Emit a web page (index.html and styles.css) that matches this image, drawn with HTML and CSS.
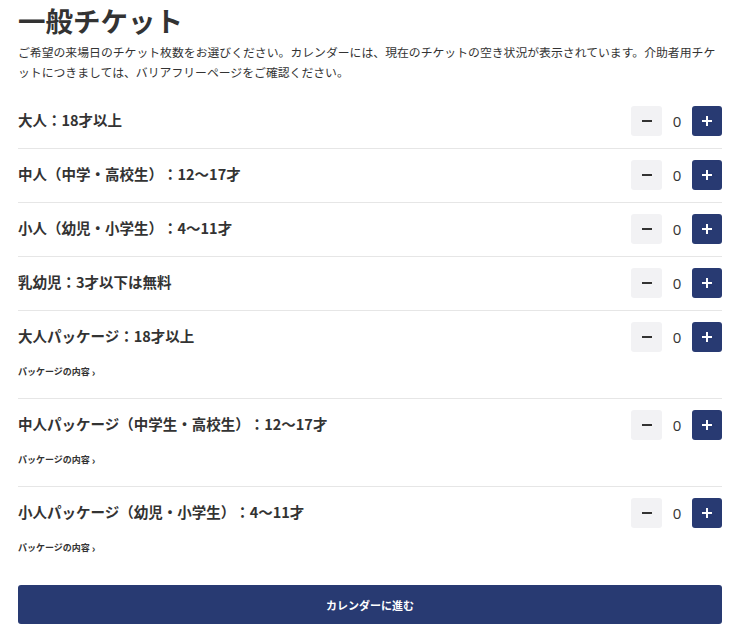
FILE: index.html
```html
<!DOCTYPE html>
<html lang="ja">
<head>
<meta charset="utf-8">
<title>一般チケット</title>
<link rel="stylesheet" href="styles.css">
</head>
<body>
<main class="page">
  <h1 class="title">一般チケット</h1>
  <p class="lead">ご希望の来場日のチケット枚数をお選びください。カレンダーには、現在のチケットの空き状況が表示されています。介助者用チケットにつきましては、バリアフリーページをご確認ください。</p>
  <ul class="tickets">
    <li class="ticket">
      <div class="ticket-main">
        <span class="ticket-name">大人：18才以上</span>
        <div class="stepper"><button class="btn-minus" aria-label="減らす"><span class="minus-bar"></span></button><span class="count">0</span><button class="btn-plus" aria-label="増やす"><svg width="12" height="12" viewBox="0 0 12 12"><path d="M6 1v10M1 6h10" stroke="#fff" stroke-width="2"/></svg></button></div>
      </div>
    </li>
    <li class="ticket">
      <div class="ticket-main">
        <span class="ticket-name">中人（中学・高校生）：12〜17才</span>
        <div class="stepper"><button class="btn-minus" aria-label="減らす"><span class="minus-bar"></span></button><span class="count">0</span><button class="btn-plus" aria-label="増やす"><svg width="12" height="12" viewBox="0 0 12 12"><path d="M6 1v10M1 6h10" stroke="#fff" stroke-width="2"/></svg></button></div>
      </div>
    </li>
    <li class="ticket">
      <div class="ticket-main">
        <span class="ticket-name">小人（幼児・小学生）：4〜11才</span>
        <div class="stepper"><button class="btn-minus" aria-label="減らす"><span class="minus-bar"></span></button><span class="count">0</span><button class="btn-plus" aria-label="増やす"><svg width="12" height="12" viewBox="0 0 12 12"><path d="M6 1v10M1 6h10" stroke="#fff" stroke-width="2"/></svg></button></div>
      </div>
    </li>
    <li class="ticket">
      <div class="ticket-main">
        <span class="ticket-name">乳幼児：3才以下は無料</span>
        <div class="stepper"><button class="btn-minus" aria-label="減らす"><span class="minus-bar"></span></button><span class="count">0</span><button class="btn-plus" aria-label="増やす"><svg width="12" height="12" viewBox="0 0 12 12"><path d="M6 1v10M1 6h10" stroke="#fff" stroke-width="2"/></svg></button></div>
      </div>
    </li>
    <li class="ticket ticket-package">
      <div class="ticket-main">
        <span class="ticket-name">大人パッケージ：18才以上</span>
        <div class="stepper"><button class="btn-minus" aria-label="減らす"><span class="minus-bar"></span></button><span class="count">0</span><button class="btn-plus" aria-label="増やす"><svg width="12" height="12" viewBox="0 0 12 12"><path d="M6 1v10M1 6h10" stroke="#fff" stroke-width="2"/></svg></button></div>
      </div>
      <a class="package-link" href="#">パッケージの内容<span class="chev">›</span></a>
    </li>
    <li class="ticket ticket-package">
      <div class="ticket-main">
        <span class="ticket-name">中人パッケージ（中学生・高校生）：12〜17才</span>
        <div class="stepper"><button class="btn-minus" aria-label="減らす"><span class="minus-bar"></span></button><span class="count">0</span><button class="btn-plus" aria-label="増やす"><svg width="12" height="12" viewBox="0 0 12 12"><path d="M6 1v10M1 6h10" stroke="#fff" stroke-width="2"/></svg></button></div>
      </div>
      <a class="package-link" href="#">パッケージの内容<span class="chev">›</span></a>
    </li>
    <li class="ticket ticket-package">
      <div class="ticket-main">
        <span class="ticket-name">小人パッケージ（幼児・小学生）：4〜11才</span>
        <div class="stepper"><button class="btn-minus" aria-label="減らす"><span class="minus-bar"></span></button><span class="count">0</span><button class="btn-plus" aria-label="増やす"><svg width="12" height="12" viewBox="0 0 12 12"><path d="M6 1v10M1 6h10" stroke="#fff" stroke-width="2"/></svg></button></div>
      </div>
      <a class="package-link" href="#">パッケージの内容<span class="chev">›</span></a>
    </li>
  </ul>
  <button class="cta">カレンダーに進む</button>
</main>
</body>
</html>
```
FILE: styles.css
```css
* { box-sizing: border-box; }
html, body { margin: 0; padding: 0; background: #fff; }
body {
  font-family: "Noto Sans CJK JP", "Noto Sans", sans-serif;
  color: #333;
  text-spacing-trim: space-all;
}
.page { padding: 0 18px; }
.title {
  margin: 0;
  font-size: 27.5px;
  line-height: 40px;
  font-weight: 700;
  color: #333;
}
.lead {
  margin: 2px 0 0;
  font-size: 11.85px;
  line-height: 20px;
  font-weight: 400;
  color: #333;
}
.tickets {
  list-style: none;
  margin: 13px 0 0;
  padding: 0;
}
.ticket {
  padding: 11px 0 12px;
  border-bottom: 1px solid #e6e6e6;
}
.ticket-package { padding-bottom: 20px; }
.ticket:last-child { border-bottom: none; }
.ticket-main {
  display: flex;
  align-items: center;
  justify-content: space-between;
  height: 30px;
}
.ticket-name {
  font-size: 14.5px;
  font-weight: 700;
  line-height: 20px;
  color: #333;
  margin-top: -2px;
}
.stepper {
  display: flex;
  align-items: center;
  height: 30px;
}
.btn-minus, .btn-plus {
  border: none;
  padding: 0;
  margin: 0;
  width: 31px;
  height: 30px;
  border-radius: 3px;
  display: flex;
  align-items: center;
  justify-content: center;
}
.btn-minus { background: #f2f2f4; }
.btn-plus { background: #283a72; width: 30px; }
.minus-bar {
  display: block;
  width: 10px;
  height: 2px;
  background: #333;
}
.count {
  width: 30px;
  text-align: center;
  font-size: 15px;
  line-height: 30px;
  color: #333;
  font-family: "Open Sans", "Noto Sans", sans-serif;
}
.package-link {
  display: flex;
  align-items: center;
  height: 12px;
  margin-top: 14px;
  font-size: 9px;
  line-height: 12px;
  font-weight: 700;
  color: #333;
  text-decoration: none;
}
.chev {
  margin-left: 2px;
  font-size: 11px;
  line-height: 12px;
  font-weight: 700;
}
.cta {
  display: block;
  width: 100%;
  margin-top: 11px;
  height: 39px;
  border: none;
  border-radius: 3px;
  background: #283a72;
  color: #fff;
  font-family: "Noto Sans CJK JP", sans-serif;
  font-size: 11px;
  font-weight: 700;
}
```
